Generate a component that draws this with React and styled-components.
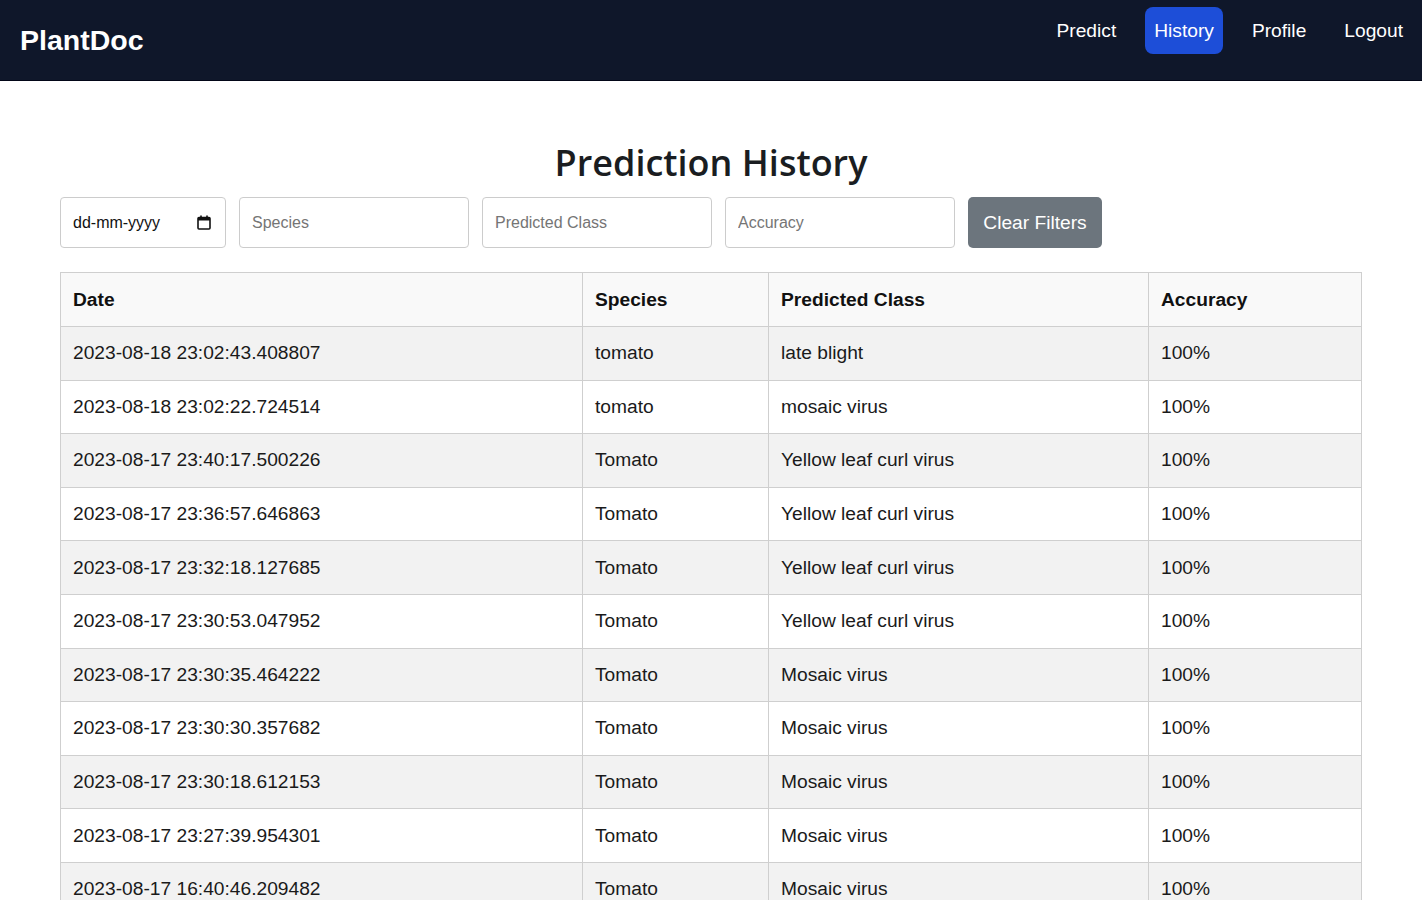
import React from 'react'
import styled, { createGlobalStyle } from 'styled-components'

const GlobalStyle = createGlobalStyle`
    body {
        margin: 0;
        background: #fff;
        font-family: "Liberation Sans", Arial, sans-serif;
        color: #212529;
    }
`

const rows = [
    ['2023-08-18 23:02:43.408807', 'tomato', 'late blight', '100%'],
    ['2023-08-18 23:02:22.724514', 'tomato', 'mosaic virus', '100%'],
    ['2023-08-17 23:40:17.500226', 'Tomato', 'Yellow leaf curl virus', '100%'],
    ['2023-08-17 23:36:57.646863', 'Tomato', 'Yellow leaf curl virus', '100%'],
    ['2023-08-17 23:32:18.127685', 'Tomato', 'Yellow leaf curl virus', '100%'],
    ['2023-08-17 23:30:53.047952', 'Tomato', 'Yellow leaf curl virus', '100%'],
    ['2023-08-17 23:30:35.464222', 'Tomato', 'Mosaic virus', '100%'],
    ['2023-08-17 23:30:30.357682', 'Tomato', 'Mosaic virus', '100%'],
    ['2023-08-17 23:30:18.612153', 'Tomato', 'Mosaic virus', '100%'],
    ['2023-08-17 23:27:39.954301', 'Tomato', 'Mosaic virus', '100%'],
    ['2023-08-17 16:40:46.209482', 'Tomato', 'Mosaic virus', '100%'],
    ['2023-08-17 16:38:12.118734', 'Tomato', 'Mosaic virus', '100%'],
]

function CalendarIcon() {
    return (
        <svg width="14" height="15" viewBox="0 0 14 15" fill="none">
            <rect x="1" y="2.5" width="12" height="11.5" rx="1" stroke="#111" strokeWidth="1.6" />
            <rect x="1" y="2.5" width="12" height="3" fill="#111" />
            <rect x="3.2" y="0.5" width="1.6" height="3" fill="#111" />
            <rect x="9.2" y="0.5" width="1.6" height="3" fill="#111" />
        </svg>
    )
}

function App() {
    return (
        <>
            <GlobalStyle />
            <NavBar>
                <Brand>PlantDoc</Brand>
                <NavLinks>
                    <NavLink href="#">Predict</NavLink>
                    <NavLink href="#" active>History</NavLink>
                    <NavLink href="#">Profile</NavLink>
                    <NavLink href="#">Logout</NavLink>
                </NavLinks>
            </NavBar>
            <Main>
                <Title>Prediction History</Title>
                <Filters>
                    <DateField>
                        <span>dd-mm-yyyy</span>
                        <CalendarIcon />
                    </DateField>
                    <FilterInput placeholder="Species" />
                    <FilterInput placeholder="Predicted Class" />
                    <FilterInput placeholder="Accuracy" />
                    <ClearButton>Clear Filters</ClearButton>
                </Filters>
                <Table>
                    <colgroup>
                        <col style={{ width: 522 }} />
                        <col style={{ width: 186 }} />
                        <col style={{ width: 380 }} />
                        <col />
                    </colgroup>
                    <thead>
                        <tr>
                            <th>Date</th>
                            <th>Species</th>
                            <th>Predicted Class</th>
                            <th>Accuracy</th>
                        </tr>
                    </thead>
                    <tbody>
                        {rows.map((r, i) => (
                            <tr key={i}>
                                {r.map((c, j) => <td key={j}>{c}</td>)}
                            </tr>
                        ))}
                    </tbody>
                </Table>
            </Main>
        </>
    )
}

const NavBar = styled.nav`
    height: 80px;
    background: #0f172a;
    border-bottom: 1px solid #020617;
    display: flex;
    justify-content: space-between;
    align-items: flex-start;
    padding: 0 10px 0 20px;
`

const Brand = styled.div`
    color: #fff;
    font-size: 28.5px;
    font-weight: bold;
    line-height: 80px;
`

const NavLinks = styled.div`
    display: flex;
    gap: 20px;
    margin-top: 7px;
`

const NavLink = styled.a`
    display: block;
    color: #fff;
    text-decoration: none;
    font-size: 19.2px;
    line-height: 23px;
    padding: 12px 9px;
    border-radius: 8px;
    background: ${p => p.active ? '#1d4ed8' : 'transparent'};
`

const Main = styled.main`
    padding: 0 60px;
`

const Title = styled.h1`
    margin: 60px 0 12px;
    text-align: center;
    font-family: "Open Sans", "Noto Sans", sans-serif;
    font-weight: 600;
    font-size: 36px;
    line-height: 44px;
    color: #1a1d21;
`

const Filters = styled.div`
    display: flex;
    gap: 13px;
    margin-bottom: 24px;
`

const fieldBase = `
    box-sizing: border-box;
    height: 51px;
    border: 1px solid #ccc;
    border-radius: 4px;
    background: #fff;
    font-family: "Liberation Sans", Arial, sans-serif;
    font-size: 16px;
    padding: 0 12px;
    flex-shrink: 0;
`

const DateField = styled.div`
    ${fieldBase}
    width: 166px;
    display: flex;
    align-items: center;
    justify-content: space-between;
    color: #111;
    padding-right: 14px;
`

const FilterInput = styled.input`
    ${fieldBase}
    width: 230px;
    color: #333;
    outline: none;
    &::placeholder {
        color: #757575;
    }
`

const ClearButton = styled.button`
    box-sizing: border-box;
    height: 51px;
    width: 134px;
    border: none;
    border-radius: 5px;
    background: #6c757d;
    color: #fff;
    font-family: "Liberation Sans", Arial, sans-serif;
    font-size: 19.2px;
    padding: 0;
    cursor: pointer;
`

const Table = styled.table`
    width: 1302px;
    border-collapse: collapse;
    table-layout: fixed;
    font-size: 19.2px;
    color: #1a1a1a;

    th, td {
        border: 1px solid #cfcfcf;
        text-align: left;
        padding: 0 12px;
        height: 53.6px;
        box-sizing: border-box;
        white-space: nowrap;
    }
    th {
        background: #f9f9f9;
        font-weight: bold;
        height: 54px;
        color: #111;
    }
    tbody tr:nth-child(odd) td {
        background: #f2f2f2;
    }
`

export default App
